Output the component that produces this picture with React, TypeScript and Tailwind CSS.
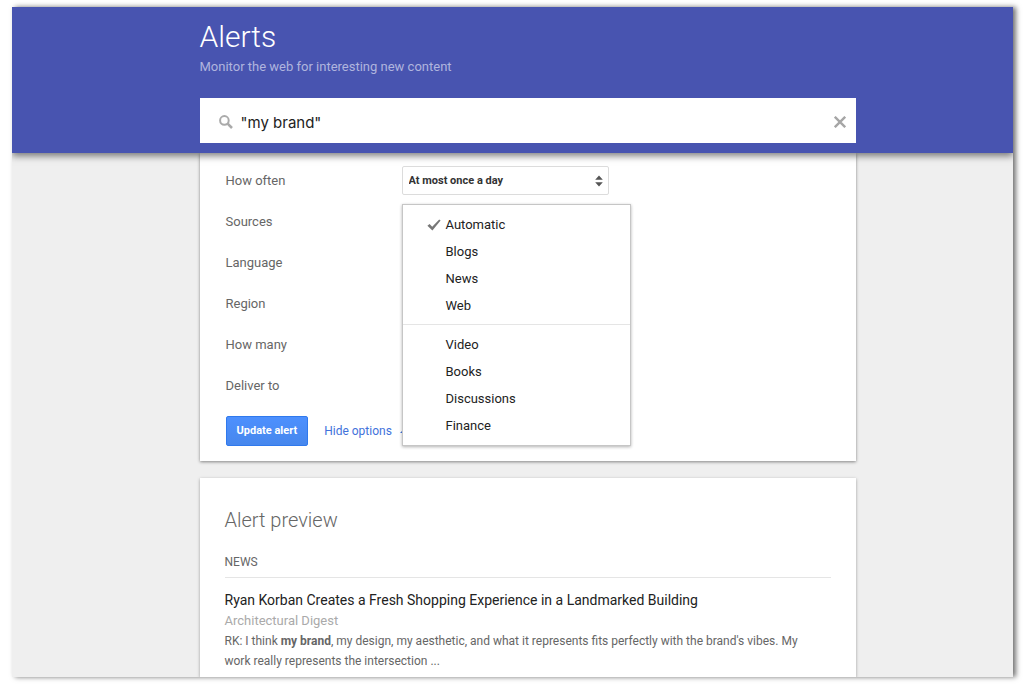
import { useState } from "react";

const mainSources = ["Automatic", "Blogs", "News", "Web"];
const moreSources = ["Video", "Books", "Discussions", "Finance"];
const otherFields = ["Language", "Region", "How many", "Deliver to"];

const labelClass = "w-44 shrink-0 text-[13px] text-[#666]";
const selectClass =
  "block h-[29px] w-[207px] appearance-none rounded-xs border border-[#dcdcdc] bg-white px-[6px] pt-px text-[11px] font-bold text-[#333]";

function SearchIcon() {
  return (
    <svg viewBox="0 0 14 14" className="size-[14px] shrink-0" fill="none" stroke="#aaa" aria-hidden="true">
      <circle cx="5.4" cy="5.4" r="4.3" strokeWidth="2" />
      <path d="M8.6 8.6 13 13" strokeWidth="2.6" />
    </svg>
  );
}

function CheckIcon() {
  return (
    <svg viewBox="0 0 14 12" className="h-3 w-[14px]" fill="#777" aria-hidden="true">
      <path d="M0.4 6.8 2.6 5 5.2 7.8 12.2 0.6 13.6 1.4 5.4 11.6Z" />
    </svg>
  );
}

function SourceItem({ name, checked, onPick }: { name: string; checked: boolean; onPick: () => void }) {
  return (
    <button
      type="button"
      role="menuitemradio"
      aria-checked={checked}
      onClick={onPick}
      className="flex h-[27px] w-full items-center pl-6 text-left text-[13px] text-[#222] hover:bg-[#eee]"
    >
      <span className="w-[19px] shrink-0">{checked && <CheckIcon />}</span>
      {name}
    </button>
  );
}

export default function App() {
  const [query, setQuery] = useState('"my brand"');
  const [source, setSource] = useState("Automatic");

  return (
    <div className="bg-white pt-[7px] pr-[11px] pb-2 pl-3 font-['Roboto',sans-serif]">
      <div className="overflow-hidden bg-[#efefef] shadow-[3px_0_5px_rgba(0,0,0,0.55)]">
        <header className="relative z-10 bg-[#4854b0] pt-[10px] pb-[10px] pl-[30px] shadow-[0_3px_7px_rgba(0,0,0,0.5)]">
          <div className="mx-auto max-w-[656px]">
            <h1 className="text-[30px] leading-10 font-light text-white">Alerts</h1>
            <p className="text-[13px] leading-5 text-[#b0b5de]">Monitor the web for interesting new content</p>
            <form
              role="search"
              onSubmit={(event) => event.preventDefault()}
              className="mt-[21px] flex h-[45px] items-center bg-white pt-[2px] pr-[10px] pl-[19px]"
            >
              <SearchIcon />
              <input
                type="text"
                aria-label="Alert query"
                value={query}
                onChange={(event) => setQuery(event.target.value)}
                className="ml-2 h-8 min-w-0 flex-1 pt-[2px] font-['Inter',sans-serif] text-[15px] text-[#222] outline-none"
              />
              <button type="button" aria-label="Clear" onClick={() => setQuery("")}>
                <svg viewBox="0 0 12 12" className="size-3" stroke="#a6a6a6" strokeWidth="2.4" aria-hidden="true">
                  <path d="M0.8 0.8 11.2 11.2M11.2 0.8 0.8 11.2" />
                </svg>
              </button>
            </form>
          </div>
        </header>

        <main className="pl-[30px]">
          <form
            onSubmit={(event) => event.preventDefault()}
            className="mx-auto max-w-[656px] bg-white px-[26px] pt-[7px] pb-[15px] shadow-[0_1px_3px_rgba(0,0,0,0.45)]"
          >
            <div className="flex h-[41px] items-center">
              <label htmlFor="how-often" className={labelClass}>
                How often
              </label>
              <div className="relative">
                <select id="how-often" className={selectClass}>
                  <option>At most once a day</option>
                </select>
                <svg
                  viewBox="0 0 8 12"
                  className="pointer-events-none absolute top-[9px] right-[6px] h-3 w-2"
                  fill="#555"
                  aria-hidden="true"
                >
                  <path d="M4 0.4 7.8 4.8H0.2ZM4 11.6 0.2 7.2H7.8Z" />
                </svg>
              </div>
            </div>

            <div className="flex h-[41px] items-center">
              <label htmlFor="sources" className={labelClass}>
                Sources
              </label>
              <div className="relative">
                <button id="sources" type="button" aria-haspopup="menu" aria-expanded="true" className={selectClass} />
                <div
                  role="menu"
                  aria-label="Sources"
                  className="absolute -top-[3px] left-0 z-20 w-[229px] border border-[#c6c6c6] bg-white py-[6px] shadow-[0_1px_3px_rgba(0,0,0,0.3)]"
                >
                  {mainSources.map((name) => (
                    <SourceItem key={name} name={name} checked={name === source} onPick={() => setSource(name)} />
                  ))}
                  <hr className="mt-[5px] mb-[6px] border-[#e5e5e5]" />
                  {moreSources.map((name) => (
                    <SourceItem key={name} name={name} checked={name === source} onPick={() => setSource(name)} />
                  ))}
                </div>
              </div>
            </div>

            {otherFields.map((name) => (
              <div key={name} className="flex h-[41px] items-center">
                <label htmlFor={name} className={labelClass}>
                  {name}
                </label>
                <select id={name} className={selectClass} />
              </div>
            ))}

            <div className="mt-[10px] flex items-center gap-4">
              <button
                type="submit"
                className="h-[30px] rounded-xs border border-[#3079ed] bg-linear-to-b from-[#4d90fe] to-[#4787ed] px-[10px] text-[11px] font-bold text-white"
              >
                Update alert
              </button>
              <a href="#options" className="flex items-center gap-2 text-[12px] text-[#4272db]">
                Hide options
                <svg viewBox="0 0 8 4" className="h-1 w-2" fill="#4272db" aria-hidden="true">
                  <path d="M0 4 4 0 8 4Z" />
                </svg>
              </a>
            </div>
          </form>

          <section className="mx-auto mt-[17px] max-w-[656px] bg-white px-[25px] pt-[26px] pb-[6px] shadow-[0_1px_3px_rgba(0,0,0,0.35)]">
            <h2 className="text-xl leading-8 font-light text-[#666]">Alert preview</h2>
            <h3 className="mt-4 border-b border-[#e5e5e5] pb-[5px] text-xs leading-5 text-[#666]">NEWS</h3>
            <article className="mt-3 text-xs leading-5 text-[#666]">
              <h4 className="text-sm leading-[21px] text-[#222]">
                Ryan Korban Creates a Fresh Shopping Experience in a Landmarked Building
              </h4>
              <p className="text-[13px] leading-5 text-[#aaa]">Architectural Digest</p>
              <p className="pr-5">
                RK: I think <b>my brand</b>, my design, my aesthetic, and what it represents fits perfectly with the
                brand's vibes. My work really represents the intersection ...
              </p>
            </article>
          </section>
        </main>
      </div>
    </div>
  );
}
